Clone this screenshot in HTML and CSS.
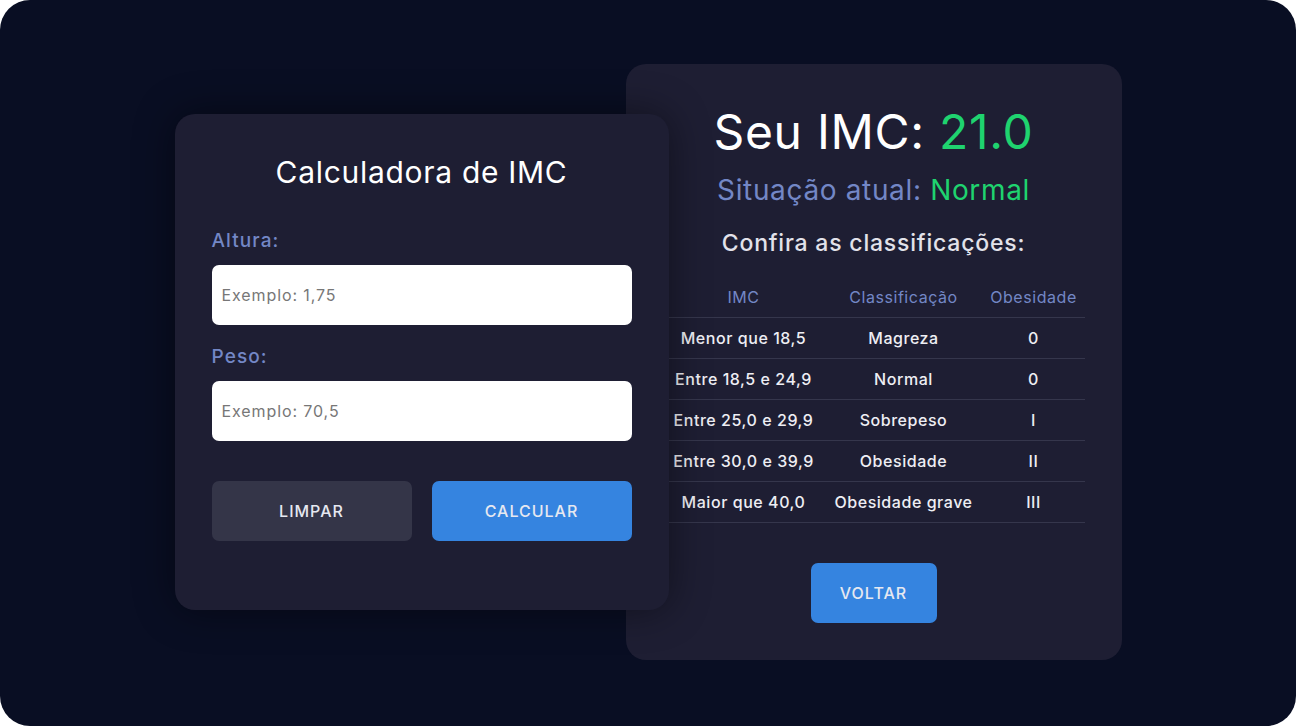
FILE: index.html
```html
<!DOCTYPE html>
<html lang="pt-BR">
<head>
<meta charset="utf-8">
<title>Calculadora de IMC</title>
<link rel="stylesheet" href="styles.css">
</head>
<body>
<div class="stage">
  <section class="card form-card">
    <h1 class="form-title">Calculadora de IMC</h1>
    <label class="field-label" for="altura">Altura:</label>
    <input class="field-input" id="altura" type="text" placeholder="Exemplo: 1,75">
    <label class="field-label label-peso" for="peso">Peso:</label>
    <input class="field-input" id="peso" type="text" placeholder="Exemplo: 70,5">
    <div class="actions">
      <button class="btn btn-secondary" type="button">LIMPAR</button>
      <button class="btn btn-primary" type="button">CALCULAR</button>
    </div>
  </section>
  <section class="card result-card">
    <h2 class="result-title">Seu IMC: <span class="green">21.0</span></h2>
    <p class="result-status">Situação atual: <span class="green">Normal</span></p>
    <p class="result-sub">Confira as classificações:</p>
    <table class="class-table">
      <colgroup>
        <col class="c1"><col class="c2"><col class="c3">
      </colgroup>
      <thead>
        <tr><th>IMC</th><th>Classificação</th><th>Obesidade</th></tr>
      </thead>
      <tbody>
        <tr><td>Menor que 18,5</td><td>Magreza</td><td>0</td></tr>
        <tr><td>Entre 18,5 e 24,9</td><td>Normal</td><td>0</td></tr>
        <tr><td>Entre 25,0 e 29,9</td><td>Sobrepeso</td><td>I</td></tr>
        <tr><td>Entre 30,0 e 39,9</td><td>Obesidade</td><td>II</td></tr>
        <tr><td>Maior que 40,0</td><td>Obesidade grave</td><td>III</td></tr>
      </tbody>
    </table>
    <button class="btn btn-primary btn-back" type="button">VOLTAR</button>
  </section>
</div>
</body>
</html>
```

FILE: styles.css
```css
* { box-sizing: border-box; }

html, body {
  margin: 0;
  padding: 0;
  background: #ffffff;
}

body {
  font-family: Inter, "Noto Sans", "DejaVu Sans", sans-serif;
}

.stage {
  width: 1296px;
  height: 726px;
  padding-bottom: 2px;
  background: #090e23;
  border-radius: 30px;
  display: flex;
  align-items: center;
  justify-content: center;
  overflow: hidden;
}

.card {
  background: #1e1e33;
  border-radius: 20px;
}

.form-card {
  width: 494px;
  padding: 40px 37px 69px;
  display: flex;
  flex-direction: column;
  position: relative;
  z-index: 2;
  box-shadow: 0 0 40px rgba(0, 0, 0, 0.45);
}

.form-title {
  margin: 0 0 39px;
  font-size: 30px;
  line-height: 36px;
  font-weight: 400;
  letter-spacing: 0.7px;
  color: #ffffff;
  text-align: center;
}

.field-label {
  font-size: 19px;
  line-height: 24px;
  font-weight: 500;
  letter-spacing: 1.1px;
  color: #7387c6;
  margin-bottom: 12px;
}

.label-peso { margin-top: 20px; }

.field-input {
  height: 60px;
  width: 100%;
  border: none;
  border-radius: 7px;
  background: #ffffff;
  padding: 0 10px;
  font-family: inherit;
  font-size: 16px;
  letter-spacing: 0.9px;
  color: #222;
  outline: none;
}

.field-input::placeholder { color: #777777; }

.actions {
  margin-top: 40px;
  display: flex;
  gap: 20px;
}

.btn {
  height: 60px;
  border: none;
  border-radius: 7px;
  font-family: inherit;
  font-size: 16px;
  font-weight: 500;
  letter-spacing: 1px;
  color: #e6e8f0;
  cursor: pointer;
}

.actions .btn { flex: 1; }

.btn-secondary { background: #343548; }
.btn-primary { background: #3584e0; }

.result-card {
  width: 496px;
  margin-left: -43px;
  padding: 39px 37px 37px;
  display: flex;
  flex-direction: column;
  align-items: center;
  position: relative;
  z-index: 1;
}

.green { color: #1fd36f; }

.result-title {
  margin: 0;
  font-size: 48px;
  line-height: 58px;
  font-weight: 400;
  letter-spacing: 0.7px;
  color: #ffffff;
}

.result-status {
  margin: 12px 0 0;
  font-size: 28px;
  line-height: 34px;
  letter-spacing: 0.65px;
  color: #7387c6;
}

.result-sub {
  margin: 22px 0 0;
  font-size: 23px;
  line-height: 28px;
  font-weight: 500;
  letter-spacing: 0.8px;
  color: #e2e2ea;
}

.class-table {
  margin-top: 20px;
  width: 100%;
  border-collapse: collapse;
  table-layout: fixed;
  font-size: 16px;
  letter-spacing: 0.55px;
}

.c1 { width: 162px; }
.c2 { width: 158px; }
.c3 { width: 102px; }

.class-table th {
  height: 41px;
  font-weight: 400;
  color: #7387c6;
  text-align: center;
  padding: 0;
  border-bottom: 1px solid #35364c;
}

.class-table td {
  height: 41px;
  font-weight: 500;
  color: #eeeef4;
  text-align: center;
  padding: 0;
  border-bottom: 1px solid #35364c;
  white-space: nowrap;
}

.btn-back {
  margin-top: 40px;
  width: 126px;
}
```
